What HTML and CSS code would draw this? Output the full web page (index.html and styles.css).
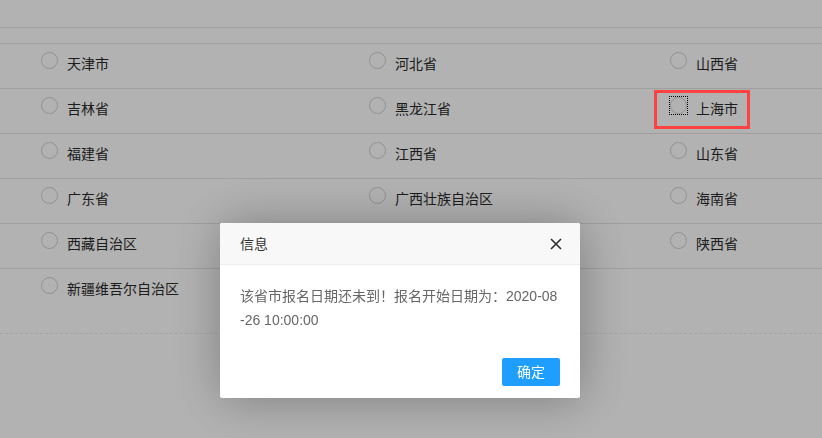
FILE: index.html
```html
<!DOCTYPE html>
<html lang="zh-CN">
<head>
    <meta charset="UTF-8">
    <title>选择报名省市</title>
    <link rel="stylesheet" href="styles.css">
</head>
<body>
    <div class="page">
        <div class="page-top"></div>
        <div class="page-gap"></div>

        <div class="area-table">
            <div class="area-row">
                <label class="area-item"><span class="radio"></span><span class="area-name">天津市</span></label>
                <label class="area-item"><span class="radio"></span><span class="area-name">河北省</span></label>
                <label class="area-item"><span class="radio"></span><span class="area-name">山西省</span></label>
            </div>
            <div class="area-row">
                <label class="area-item"><span class="radio"></span><span class="area-name">吉林省</span></label>
                <label class="area-item"><span class="radio"></span><span class="area-name">黑龙江省</span></label>
                <label class="area-item marked"><span class="radio focused"></span><span class="area-name">上海市</span></label>
            </div>
            <div class="area-row">
                <label class="area-item"><span class="radio"></span><span class="area-name">福建省</span></label>
                <label class="area-item"><span class="radio"></span><span class="area-name">江西省</span></label>
                <label class="area-item"><span class="radio"></span><span class="area-name">山东省</span></label>
            </div>
            <div class="area-row">
                <label class="area-item"><span class="radio"></span><span class="area-name">广东省</span></label>
                <label class="area-item"><span class="radio"></span><span class="area-name">广西壮族自治区</span></label>
                <label class="area-item"><span class="radio"></span><span class="area-name">海南省</span></label>
            </div>
            <div class="area-row">
                <label class="area-item"><span class="radio"></span><span class="area-name">西藏自治区</span></label>
                <label class="area-item"><span class="radio"></span><span class="area-name">甘肃省</span></label>
                <label class="area-item"><span class="radio"></span><span class="area-name">陕西省</span></label>
            </div>
            <div class="area-row last">
                <label class="area-item"><span class="radio"></span><span class="area-name">新疆维吾尔自治区</span></label>
            </div>
        </div>
    </div>

    <!-- layer shade + dialog -->
    <div class="layer-shade"></div>
    <div class="layer-dialog">
        <div class="layer-title">
            信息
            <span class="layer-close">
                <svg width="12" height="12" viewBox="0 0 12 12">
                    <path d="M1 1 L11 11 M11 1 L1 11" stroke="#2f2f2f" stroke-width="1.6" fill="none"/>
                </svg>
            </span>
        </div>
        <div class="layer-content">该省市报名日期还未到！报名开始日期为：2020-08-26 10:00:00</div>
        <div class="layer-btn">
            <a class="layer-btn0">确定</a>
        </div>
    </div>
</body>
</html>
```

FILE: styles.css
```css
* {
    margin: 0;
    padding: 0;
    box-sizing: border-box;
}

body {
    font-family: "Liberation Sans", "Noto Sans CJK SC", sans-serif;
    font-size: 14px;
    color: #333;
    background: #fff;
}

.page-top {
    height: 28px;
    border-bottom: 1px solid #e4e4e4;
}

.page-gap {
    height: 16px;
    border-bottom: 1px solid #e4e4e4;
}

.area-row {
    display: grid;
    grid-template-columns: 328px 301px 1fr;
    height: 45px;
    padding: 8px 0 0 41px;
    border-bottom: 1px solid #e4e4e4;
}

.area-row.last {
    height: 65px;
    border-bottom: 1px dashed #ededed;
}

.area-item {
    display: flex;
    align-items: flex-start;
    gap: 9px;
    position: relative;
    cursor: pointer;
}

.radio {
    position: relative;
    width: 17px;
    height: 17px;
    border: 1px solid #cfcfcf;
    border-radius: 50%;
    background: #fff;
}

.radio.focused::after {
    content: "";
    position: absolute;
    inset: -2px;
    border: 1px dotted #000;
}

.area-name {
    line-height: 24px;
    color: #2a2a2a;
}

.area-item.marked::after {
    content: "";
    position: absolute;
    left: -16px;
    top: -7px;
    width: 90px;
    height: 33px;
    border: 3px solid #ff4141;
    z-index: 20;
}

.layer-shade {
    position: fixed;
    inset: 0;
    background: rgba(0, 0, 0, 0.3);
    z-index: 10;
}

.layer-dialog {
    position: fixed;
    left: 220px;
    top: 223px;
    width: 360px;
    background: #fff;
    border-radius: 2px;
    box-shadow: 1px 1px 50px rgba(0, 0, 0, 0.3);
    z-index: 11;
}

.layer-title {
    position: relative;
    height: 42px;
    line-height: 42px;
    padding: 0 80px 0 20px;
    border-bottom: 1px solid #eee;
    background: #f8f8f8;
    color: #333;
    border-radius: 2px 2px 0 0;
}

.layer-close {
    position: absolute;
    right: 18px;
    top: 15px;
    width: 12px;
    height: 12px;
    display: flex;
}

.layer-content {
    padding: 19px 20px 21px;
    line-height: 24px;
    color: #666;
    word-break: break-all;
}

.layer-btn {
    display: flex;
    justify-content: flex-end;
    padding: 0 15px 12px;
}

.layer-btn0 {
    height: 28px;
    line-height: 28px;
    margin: 5px 5px 0;
    padding: 0 15px;
    background: #1e9fff;
    color: #fff;
    border-radius: 2px;
    cursor: pointer;
}
```
